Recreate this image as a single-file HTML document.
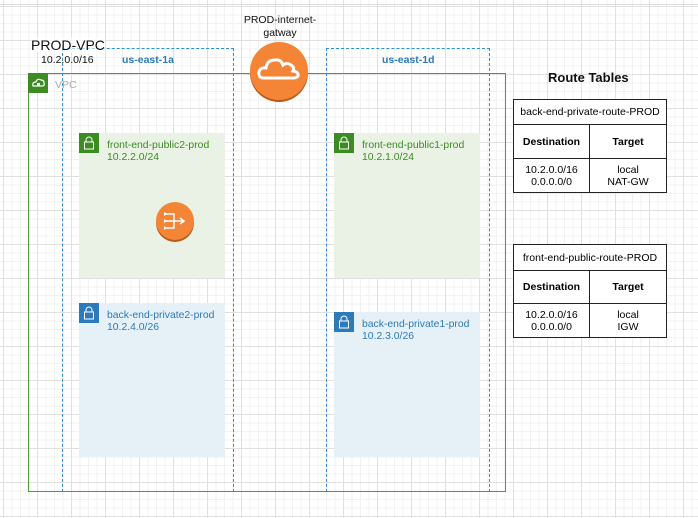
<!DOCTYPE html>
<html><head><style>
*{margin:0;padding:0;box-sizing:border-box}
body{width:698px;height:518px;overflow:hidden;position:relative;font-family:"Liberation Sans",sans-serif;
background-color:#fff;
background-image:linear-gradient(#e0e0e0 1px,transparent 1px),linear-gradient(90deg,#e0e0e0 1px,transparent 1px),linear-gradient(#f1f1f1 1px,transparent 1px),linear-gradient(90deg,#f1f1f1 1px,transparent 1px);
background-size:34px 34px,34px 34px,8.5px 8.5px,8.5px 8.5px;background-position:3px 6px,3px 6px,3px 6px,3px 6px;}
.a{position:absolute}
.vpc{left:28px;top:73px;width:478px;height:419px;border:1.5px solid #4aa032}
.az{border:1px dashed #2c8fd0}
.sub{font-size:10.4px;line-height:12px}
.g{background:#e9f2e4;color:#3c8c23}
.b{background:#e6f0f7;color:#2c7ab8}
.ic{position:absolute;left:0;top:0;width:20px;height:20px}
.t{position:absolute;left:28px;top:7px}
table{border-collapse:collapse;background:#fff;font-size:10.5px;text-align:center;position:absolute}
td{border:1.3px solid #222;}
</style></head><body>
<div class="a" style="left:0;top:4px;width:698px;height:1px;background:#ddd"></div>
<div class="a vpc"></div>
<div class="a" style="left:28px;top:73px;width:20px;height:20px;background:#3c8c23"><svg width="20" height="20"><path d="M5 13 Q4 9 8 9 Q9 5 13 7 Q16 7 16 10 Q17 13 14 13 Z" fill="none" stroke="#fff" stroke-width="1.2"/><rect x="9" y="10" width="3" height="3" fill="#fff"/></svg></div>
<div class="a" style="left:55px;top:79px;font-size:10.5px;color:#aaa">VPC</div>
<div class="a az" style="left:62px;top:48px;width:172px;height:444px"></div>
<div class="a az" style="left:326px;top:48px;width:164px;height:444px"></div>
<div class="a" style="left:31px;top:37px;font-size:14px;color:#111;background:rgba(255,255,255,.6)">PROD-VPC</div>
<div class="a" style="left:41px;top:54px;font-size:10.5px;color:#111">10.2.0.0/16</div>
<div class="a" style="left:122px;top:54px;font-size:10.5px;font-weight:bold;color:#2c7ab8">us-east-1a</div>
<div class="a" style="left:382px;top:54px;font-size:10.5px;font-weight:bold;color:#2c7ab8">us-east-1d</div>
<div class="a" style="left:238px;top:14px;width:84px;text-align:center;font-size:10.5px;line-height:13px;color:#111">PROD-internet-<br>gatway</div>
<div class="a" style="left:250px;top:42px;width:58px;height:58px;border-radius:50%;background:#f58536;box-shadow:0 2px 0 #b65a1c"><svg width="58" height="58"><path d="M14 36 Q8 36 9 30 Q10 25 16 26 Q17 18 25 18 Q31 17 33 23 Q37 20 41 23 Q45 26 43 29 Q49 30 48 34 Q47 36 43 36 Z" fill="none" stroke="#fff" stroke-width="3"/></svg></div>

<div class="a sub g" style="left:79px;top:133px;width:146px;height:145px"><div class="ic" style="background:#3c8c23"></div><svg class="ic" width="20" height="20"><path d="M7 9V7a3 3 0 0 1 6 0v2" fill="none" stroke="#fff"/><rect x="5.5" y="9" width="9" height="7" fill="none" stroke="#fff"/></svg><div class="t">front-end-public2-prod<br>10.2.2.0/24</div></div>
<div class="a sub b" style="left:79px;top:303px;width:146px;height:154px"><div class="ic" style="background:#2c7ab8"></div><svg class="ic" width="20" height="20"><path d="M7 9V7a3 3 0 0 1 6 0v2" fill="none" stroke="#fff"/><rect x="5.5" y="9" width="9" height="7" fill="none" stroke="#fff"/></svg><div class="t">back-end-private2-prod<br>10.2.4.0/26</div></div>
<div class="a sub g" style="left:334px;top:133px;width:146px;height:145px"><div class="ic" style="background:#3c8c23"></div><svg class="ic" width="20" height="20"><path d="M7 9V7a3 3 0 0 1 6 0v2" fill="none" stroke="#fff"/><rect x="5.5" y="9" width="9" height="7" fill="none" stroke="#fff"/></svg><div class="t">front-end-public1-prod<br>10.2.1.0/24</div></div>
<div class="a sub b" style="left:334px;top:312px;width:146px;height:145px"><div class="ic" style="background:#2c7ab8"></div><svg class="ic" width="20" height="20"><path d="M7 9V7a3 3 0 0 1 6 0v2" fill="none" stroke="#fff"/><rect x="5.5" y="9" width="9" height="7" fill="none" stroke="#fff"/></svg><div class="t">back-end-private1-prod<br>10.2.3.0/26</div></div>

<div class="a" style="left:156px;top:202px;width:38px;height:38px;border-radius:50%;background:#f58536;box-shadow:0 2px 0 #b65a1c"><svg width="38" height="38"><g stroke="#fff" stroke-width="1.5" fill="none"><path d="M10 12h8v14h-8M10 19h18M24 16l4 3-4 3"/></g><path d="M8 10l3 2-3 2zM8 17l3 2-3 2zM8 24l3 2-3 2z" fill="#fff"/></svg></div>

<div class="a" style="left:548px;top:70px;font-size:13px;font-weight:bold;color:#111">Route Tables</div>
<table style="left:513px;top:99px;width:154px">
<tr style="height:25px"><td colspan="2">back-end-private-route-PROD</td></tr>
<tr style="height:34px;font-weight:bold"><td style="width:76px">Destination</td><td>Target</td></tr>
<tr style="height:34px;line-height:12px"><td>10.2.0.0/16<br>0.0.0.0/0</td><td>local<br>NAT-GW</td></tr>
</table>
<table style="left:513px;top:244px;width:154px">
<tr style="height:26px"><td colspan="2">front-end-public-route-PROD</td></tr>
<tr style="height:33px;font-weight:bold"><td style="width:76px">Destination</td><td>Target</td></tr>
<tr style="height:34px;line-height:12px"><td>10.2.0.0/16<br>0.0.0.0/0</td><td>local<br>IGW</td></tr>
</table>
</body></html>
